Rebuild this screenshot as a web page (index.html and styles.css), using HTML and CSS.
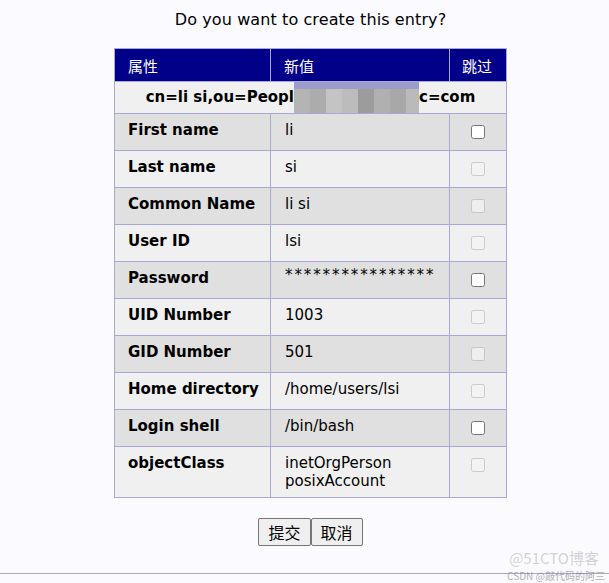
FILE: index.html
```html
<!DOCTYPE html>
<html lang="en">
<head>
    <meta charset="UTF-8">
    <title>Create entry</title>
    <link rel="stylesheet" href="styles.css">
</head>
<body>
    <h3 class="title">Do you want to create this entry?</h3>

    <form class="confirm">
        <table class="entry">
            <colgroup>
                <col class="c1">
                <col class="c2">
                <col class="c3">
            </colgroup>
            <thead>
                <tr>
                    <th>属性</th>
                    <th>新值</th>
                    <th class="col-skip">跳过</th>
                </tr>
            </thead>
            <tbody>
                <tr class="dn-row">
                    <td colspan="3">cn=li si,ou=Peopl<span class="blur"><i></i><i></i><i></i><i></i><i></i><i></i><i></i><i></i></span>c=com</td>
                </tr>
                <tr class="odd">
                    <td class="attr">First name</td>
                    <td class="val">li</td>
                    <td class="skip"><input type="checkbox"></td>
                </tr>
                <tr class="even">
                    <td class="attr">Last name</td>
                    <td class="val">si</td>
                    <td class="skip"><input type="checkbox" disabled></td>
                </tr>
                <tr class="odd">
                    <td class="attr">Common Name</td>
                    <td class="val">li si</td>
                    <td class="skip"><input type="checkbox" disabled></td>
                </tr>
                <tr class="even">
                    <td class="attr">User ID</td>
                    <td class="val">lsi</td>
                    <td class="skip"><input type="checkbox" disabled></td>
                </tr>
                <tr class="odd">
                    <td class="attr">Password</td>
                    <td class="val"><span class="stars">****************</span></td>
                    <td class="skip"><input type="checkbox"></td>
                </tr>
                <tr class="even">
                    <td class="attr">UID Number</td>
                    <td class="val">1003</td>
                    <td class="skip"><input type="checkbox" disabled></td>
                </tr>
                <tr class="odd">
                    <td class="attr">GID Number</td>
                    <td class="val">501</td>
                    <td class="skip"><input type="checkbox" disabled></td>
                </tr>
                <tr class="even">
                    <td class="attr">Home directory</td>
                    <td class="val">/home/users/lsi</td>
                    <td class="skip"><input type="checkbox" disabled></td>
                </tr>
                <tr class="odd">
                    <td class="attr">Login shell</td>
                    <td class="val">/bin/bash</td>
                    <td class="skip"><input type="checkbox"></td>
                </tr>
                <tr class="even">
                    <td class="attr">objectClass</td>
                    <td class="val">inetOrgPerson<br>posixAccount</td>
                    <td class="skip"><input type="checkbox" disabled></td>
                </tr>
            </tbody>
        </table>

        <div class="actions">
            <button type="button" class="btn">提交</button><button type="button" class="btn">取消</button>
        </div>
    </form>

    <div class="footer">
        <span class="mark">@51CTO博客</span>
        <span class="mark small">CSDN @敲代码的阿三</span>
    </div>
</body>
</html>
```

FILE: styles.css
```css
html {
    background: #fafaff;
}

body {
    margin: 0;
    padding-left: 12px;
    box-sizing: border-box;
    font-family: "DejaVu Sans", Verdana, "Noto Sans CJK SC", sans-serif;
    color: #000;
    width: 609px;
    height: 583px;
    display: flex;
    flex-direction: column;
    align-items: center;
    position: relative;
}

.title {
    font-size: 16px;
    font-weight: normal;
    margin: 10px 0 18px 0;
    line-height: 20px;
    letter-spacing: 0.1px;
}

.confirm {
    display: flex;
    flex-direction: column;
    align-items: center;
}

.entry {
    border-collapse: collapse;
    table-layout: fixed;
    width: 392px;
    font-size: 15px;
    border: 1px solid #a8a8d8;
}

.c1 { width: 156px; }
.c2 { width: 179px; }
.c3 { width: 57px; }

.entry th {
    background: #000088;
    color: #fff;
    font-weight: normal;
    text-align: left;
    height: 32px;
    padding: 0 13px;
    border: 1px solid #a8a8d8;
    font-family: "Noto Sans CJK SC", sans-serif;
}

.entry th.col-skip {
    padding: 0 12px;
}

.entry td {
    border: 1px solid #a8a8d8;
    padding: 7px 13px 7px 13px;
    vertical-align: top;
    line-height: 18px;
    white-space: nowrap;
}

.dn-row td {
    background: #f0f0f0;
    font-weight: bold;
    text-align: center;
    padding: 6px 0 6px 0;
    height: 18px;
}

.blur {
    display: inline-flex;
    vertical-align: top;
    height: 24px;
    margin-top: -6px;
    margin-bottom: -6px;
    border-top: 7px solid #9c9cc8;
}

.blur i {
    display: block;
    width: 16px;
    height: 24px;
    background: #b4b4b4;
}

.blur i:nth-child(2) { background: #acacac; }
.blur i:nth-child(3) { background: #c4c4c4; }
.blur i:nth-child(4) { background: #bcbcbc; }
.blur i:nth-child(5) { background: #9c9c9c; }
.blur i:nth-child(6) { background: #b0b0b0; }
.blur i:nth-child(7) { background: #a8a8a8; }
.blur i:nth-child(8) { background: #bababa; width: 13px; }

.odd td {
    background: #e0e0e0;
}

.even td {
    background: #f0f0f0;
}

.entry td.attr {
    font-weight: bold;
}

.entry td.val {
    padding-left: 14px;
}

.stars {
    letter-spacing: 1.9px;
    position: relative;
    top: -3px;
}

.entry td.skip {
    text-align: center;
    padding: 11px 0 11px 0;
}

.skip input {
    width: 14px;
    height: 14px;
    display: block;
    margin: 0 auto;
}

.actions {
    margin-top: 20px;
    display: flex;
}

.btn {
    font-family: "Noto Sans CJK SC", sans-serif;
    font-size: 16px;
    padding: 0 9px;
    height: 28px;
    background: #efefef;
    border: 1px solid #767676;
    border-radius: 2px;
    color: #000;
}

.footer {
    position: absolute;
    left: 0;
    right: 0;
    bottom: 9px;
    border-bottom: 1px solid #a8a8c8;
    height: 20px;
}

.mark {
    position: absolute;
    right: 10px;
    bottom: 7px;
    font-family: "Noto Sans CJK SC", sans-serif;
    font-size: 15px;
    line-height: 17px;
    color: rgba(160, 160, 160, 0.45);
}

.mark.small {
    font-size: 10px;
    line-height: 11px;
    bottom: -8px;
    right: 4px;
    color: rgba(120, 120, 120, 0.6);
}
```
